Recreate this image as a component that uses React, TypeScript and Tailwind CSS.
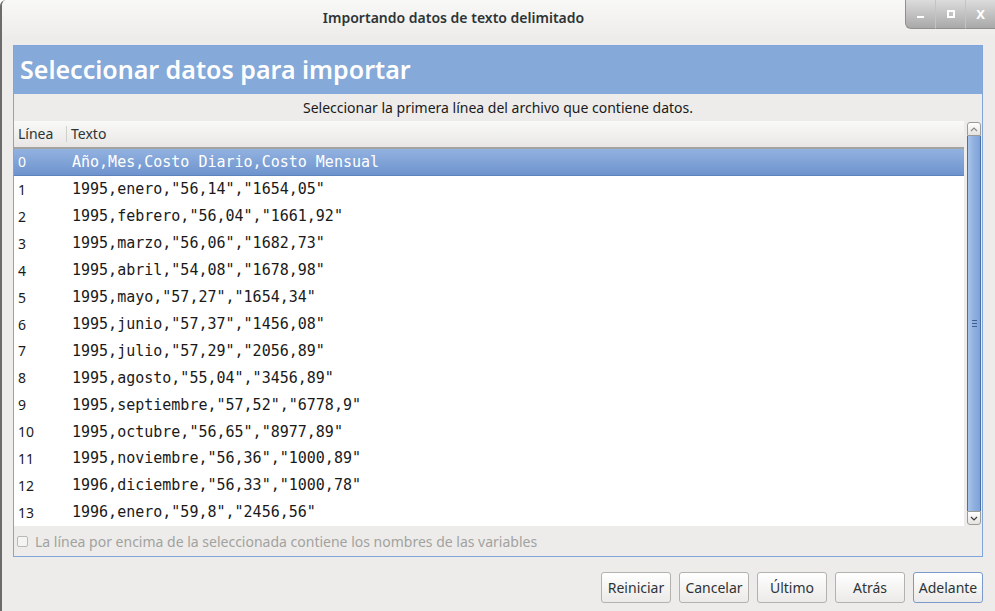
import React from "react";

const rows: string[] = [
  "Año,Mes,Costo Diario,Costo Mensual",
  '1995,enero,"56,14","1654,05"',
  '1995,febrero,"56,04","1661,92"',
  '1995,marzo,"56,06","1682,73"',
  '1995,abril,"54,08","1678,98"',
  '1995,mayo,"57,27","1654,34"',
  '1995,junio,"57,37","1456,08"',
  '1995,julio,"57,29","2056,89"',
  '1995,agosto,"55,04","3456,89"',
  '1995,septiembre,"57,52","6778,9"',
  '1995,octubre,"56,65","8977,89"',
  '1995,noviembre,"56,36","1000,89"',
  '1996,diciembre,"56,33","1000,78"',
  '1996,enero,"59,8","2456,56"',
];

const ui = { fontFamily: '"Noto Sans", "DejaVu Sans", sans-serif' };
const mono = { fontFamily: '"DejaVu Sans Mono", "Liberation Mono", monospace' };

function WinButton({ children, first }: { children: React.ReactNode; first?: boolean }) {
  return (
    <div
      className={
        "w-[30px] h-full flex items-center justify-center bg-gradient-to-b from-[#dcdcdc] to-[#a9a9a9] border-[#8f8f8f] border-b " +
        (first ? "border-l rounded-bl-[6px]" : "border-l border-l-[#c4c4c4]")
      }
    >
      {children}
    </div>
  );
}

function DialogButton({ label, focused }: { label: string; focused?: boolean }) {
  return (
    <button
      className={
        "w-[70px] h-[31px] rounded-[3px] border bg-gradient-to-b from-[#ffffff] to-[#ebeae8] text-[14px] text-[#2e3436] " +
        (focused ? "border-[#7a9acb]" : "border-[#b3b2ae]")
      }
      style={ui}
    >
      {label}
    </button>
  );
}

export default function App() {
  return (
    <div
      className="w-[995px] h-[611px] bg-[#edecea] border-l-2 border-[#6b6b6b] rounded-tl-[6px] flex flex-col overflow-hidden"
      style={ui}
    >
      {/* barra de título */}
      <div className="h-[36px] flex bg-gradient-to-b from-[#f8f8f7] to-[#eeedeb]">
        <div className="flex-1 flex items-center justify-center pb-[2px] text-[14px] font-semibold text-[#2e3436]">
          Importando datos de texto delimitado
        </div>
        <div className="h-[29px] flex">
          <WinButton first>
            <div className="w-[7px] h-[2px] bg-white mt-[6px]" />
          </WinButton>
          <WinButton>
            <div className="w-[8px] h-[8px] border-2 border-white" />
          </WinButton>
          <WinButton>
            <span className="text-white text-[13px] font-bold leading-none">X</span>
          </WinButton>
        </div>
      </div>

      {/* panel */}
      <div className="mt-[9px] ml-[11px] mr-[12px] h-[512px] border border-[#7fa5da] flex flex-col bg-[#edecea]">
        <div className="h-[48px] bg-[#85a9d8] flex items-center px-[6px] text-white text-[25px] font-semibold">
          Seleccionar datos para importar
        </div>
        <div className="h-[27px] flex items-center justify-center text-[14px] text-[#1a1a1a]">
          Seleccionar la primera línea del archivo que contiene datos.
        </div>

        <div className="flex h-[405px]">
          {/* tabla */}
          <div className="flex-1 bg-white flex flex-col">
            <div className="h-[28px] flex items-center bg-gradient-to-b from-[#f9f9f8] to-[#e8e7e5] border-b-2 border-[#a3a3a1] text-[14px] text-[#2e3436]">
              <div className="w-[53px] pl-[4px] border-r border-[#cfcfcc] h-[16px] flex items-center">Línea</div>
              <div className="pl-[4px]">Texto</div>
            </div>
            {rows.map((r, i) => (
              <div
                key={i}
                className={
                  "h-[27px] flex items-center " +
                  (i === 0
                    ? "bg-gradient-to-b from-[#92b2e0] to-[#6e93cd] text-white border-b border-[#5c81bd]"
                    : "text-[#1a1a1a]")
                }
              >
                <div className="w-[58px] pl-[4px] text-[14px]" style={ui}>
                  {i}
                </div>
                <div className="text-[15px] whitespace-pre" style={mono}>
                  {r}
                </div>
              </div>
            ))}
          </div>

          {/* barra de desplazamiento */}
          <div className="w-[18px] pl-[3px] pt-[1px] pb-[1px] flex flex-col">
            <div className="w-[14px] h-[14px] border border-[#9b9b98] rounded-t-[3px] bg-gradient-to-b from-[#ffffff] to-[#e4e3e0] flex items-center justify-center">
              <svg width="8" height="5" viewBox="0 0 8 5">
                <path d="M1 4 L4 1 L7 4" stroke="#8a8a8a" strokeWidth="1.2" fill="none" />
              </svg>
            </div>
            <div className="w-[14px] flex-1 border-x border-[#4a6fa8] bg-gradient-to-r from-[#a9c4ea] via-[#8fb0df] to-[#7fa3d8] flex items-center justify-center">
              <div className="flex flex-col gap-[2px]">
                <div className="w-[5px] h-[1px] bg-[#3d5f94]" />
                <div className="w-[5px] h-[1px] bg-[#3d5f94]" />
                <div className="w-[5px] h-[1px] bg-[#3d5f94]" />
              </div>
            </div>
            <div className="w-[14px] h-[14px] border border-[#9b9b98] rounded-b-[3px] bg-gradient-to-b from-[#ffffff] to-[#e4e3e0] flex items-center justify-center">
              <svg width="8" height="5" viewBox="0 0 8 5">
                <path d="M1 1 L4 4 L7 1" stroke="#3a3a3a" strokeWidth="1.2" fill="none" />
              </svg>
            </div>
          </div>
        </div>

        <div className="flex-1 flex items-center pl-[3px] gap-[7px] text-[14px] text-[#a2a29f]">
          <div className="w-[11px] h-[11px] border border-[#b8b8b5] rounded-[2px] bg-[#f4f4f3]" />
          <span>La línea por encima de la seleccionada contiene los nombres de las variables</span>
        </div>
      </div>

      {/* botones */}
      <div className="mt-[15px] mr-[12px] flex justify-end gap-[8px]">
        <DialogButton label="Reiniciar" />
        <DialogButton label="Cancelar" />
        <DialogButton label="Último" />
        <DialogButton label="Atrás" />
        <DialogButton label="Adelante" focused />
      </div>
    </div>
  );
}
